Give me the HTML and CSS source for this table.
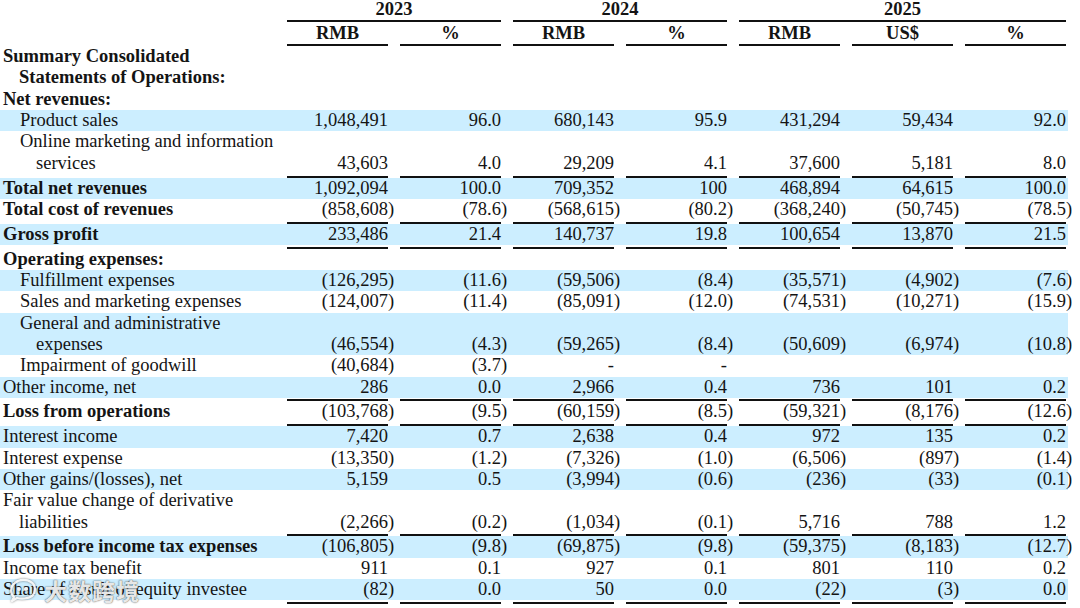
FILE: index.html
```html
<!DOCTYPE html>
<html lang="en">
<head>
<meta charset="utf-8">
<title>Summary Consolidated Statements of Operations</title>
<link rel="stylesheet" href="styles.css">
</head>
<body>
<div class="sheet">
  <div class="r head1">
    <div></div>
    <div class="yr span2">2023</div>
    <div class="yr span2">2024</div>
    <div class="yr span3">2025</div>
  </div>
  <div class="r head2">
    <div></div>
    <div class="ch">RMB</div><div class="ch">%</div>
    <div class="ch">RMB</div><div class="ch">%</div>
    <div class="ch">RMB</div><div class="ch">US$</div><div class="ch">%</div>
  </div>

  <div class="r"><div class="lb b l0">Summary Consolidated<br>Statements of Operations:</div></div>
  <div class="r"><div class="lb b l0">Net revenues:</div></div>

  <div class="r hl"><div class="lb l1">Product sales</div>
    <div class="v">1,048,491</div><div class="v">96.0</div><div class="v">680,143</div><div class="v">95.9</div><div class="v">431,294</div><div class="v">59,434</div><div class="v">92.0</div></div>
  <div class="r"><div class="lb l1">Online marketing and information<br>services</div>
    <div class="v">43,603</div><div class="v">4.0</div><div class="v">29,209</div><div class="v">4.1</div><div class="v">37,600</div><div class="v">5,181</div><div class="v">8.0</div></div>
  <div class="rule"><span></span><i></i><i></i><i></i><i></i><i></i><i></i><i></i></div>

  <div class="r hl"><div class="lb b l0">Total net revenues</div>
    <div class="v">1,092,094</div><div class="v">100.0</div><div class="v">709,352</div><div class="v">100</div><div class="v">468,894</div><div class="v">64,615</div><div class="v">100.0</div></div>
  <div class="r"><div class="lb b l0">Total cost of revenues</div>
    <div class="v"><span class="ng">(858,608)</span></div><div class="v"><span class="ng">(78.6)</span></div><div class="v"><span class="ng">(568,615)</span></div><div class="v"><span class="ng">(80.2)</span></div><div class="v"><span class="ng">(368,240)</span></div><div class="v"><span class="ng">(50,745)</span></div><div class="v"><span class="ng">(78.5)</span></div></div>
  <div class="rule"><span></span><i></i><i></i><i></i><i></i><i></i><i></i><i></i></div>

  <div class="r hl"><div class="lb b l0">Gross profit</div>
    <div class="v">233,486</div><div class="v">21.4</div><div class="v">140,737</div><div class="v">19.8</div><div class="v">100,654</div><div class="v">13,870</div><div class="v">21.5</div></div>
  <div class="rule"><span></span><i></i><i></i><i></i><i></i><i></i><i></i><i></i></div>

  <div class="r"><div class="lb b l0">Operating expenses:</div></div>
  <div class="r hl"><div class="lb l1">Fulfillment expenses</div>
    <div class="v"><span class="ng">(126,295)</span></div><div class="v"><span class="ng">(11.6)</span></div><div class="v"><span class="ng">(59,506)</span></div><div class="v"><span class="ng">(8.4)</span></div><div class="v"><span class="ng">(35,571)</span></div><div class="v"><span class="ng">(4,902)</span></div><div class="v"><span class="ng">(7.6)</span></div></div>
  <div class="r"><div class="lb l1">Sales and marketing expenses</div>
    <div class="v"><span class="ng">(124,007)</span></div><div class="v"><span class="ng">(11.4)</span></div><div class="v"><span class="ng">(85,091)</span></div><div class="v"><span class="ng">(12.0)</span></div><div class="v"><span class="ng">(74,531)</span></div><div class="v"><span class="ng">(10,271)</span></div><div class="v"><span class="ng">(15.9)</span></div></div>
  <div class="r hl"><div class="lb l1">General and administrative<br>expenses</div>
    <div class="v"><span class="ng">(46,554)</span></div><div class="v"><span class="ng">(4.3)</span></div><div class="v"><span class="ng">(59,265)</span></div><div class="v"><span class="ng">(8.4)</span></div><div class="v"><span class="ng">(50,609)</span></div><div class="v"><span class="ng">(6,974)</span></div><div class="v"><span class="ng">(10.8)</span></div></div>
  <div class="r"><div class="lb l1">Impairment of goodwill</div>
    <div class="v"><span class="ng">(40,684)</span></div><div class="v"><span class="ng">(3.7)</span></div><div class="v">-</div><div class="v">-</div><div class="v"></div><div class="v"></div><div class="v"></div></div>
  <div class="r hl"><div class="lb l0">Other income, net</div>
    <div class="v">286</div><div class="v">0.0</div><div class="v">2,966</div><div class="v">0.4</div><div class="v">736</div><div class="v">101</div><div class="v">0.2</div></div>
  <div class="rule"><span></span><i></i><i></i><i></i><i></i><i></i><i></i><i></i></div>

  <div class="r"><div class="lb b l0">Loss from operations</div>
    <div class="v"><span class="ng">(103,768)</span></div><div class="v"><span class="ng">(9.5)</span></div><div class="v"><span class="ng">(60,159)</span></div><div class="v"><span class="ng">(8.5)</span></div><div class="v"><span class="ng">(59,321)</span></div><div class="v"><span class="ng">(8,176)</span></div><div class="v"><span class="ng">(12.6)</span></div></div>
  <div class="rule"><span></span><i></i><i></i><i></i><i></i><i></i><i></i><i></i></div>

  <div class="r hl"><div class="lb l0">Interest income</div>
    <div class="v">7,420</div><div class="v">0.7</div><div class="v">2,638</div><div class="v">0.4</div><div class="v">972</div><div class="v">135</div><div class="v">0.2</div></div>
  <div class="r"><div class="lb l0">Interest expense</div>
    <div class="v"><span class="ng">(13,350)</span></div><div class="v"><span class="ng">(1.2)</span></div><div class="v"><span class="ng">(7,326)</span></div><div class="v"><span class="ng">(1.0)</span></div><div class="v"><span class="ng">(6,506)</span></div><div class="v"><span class="ng">(897)</span></div><div class="v"><span class="ng">(1.4)</span></div></div>
  <div class="r hl"><div class="lb l0">Other gains/(losses), net</div>
    <div class="v">5,159</div><div class="v">0.5</div><div class="v"><span class="ng">(3,994)</span></div><div class="v"><span class="ng">(0.6)</span></div><div class="v"><span class="ng">(236)</span></div><div class="v"><span class="ng">(33)</span></div><div class="v"><span class="ng">(0.1)</span></div></div>
  <div class="r"><div class="lb l0">Fair value change of derivative<br>liabilities</div>
    <div class="v"><span class="ng">(2,266)</span></div><div class="v"><span class="ng">(0.2)</span></div><div class="v"><span class="ng">(1,034)</span></div><div class="v"><span class="ng">(0.1)</span></div><div class="v">5,716</div><div class="v">788</div><div class="v">1.2</div></div>
  <div class="rule"><span></span><i></i><i></i><i></i><i></i><i></i><i></i><i></i></div>

  <div class="r hl"><div class="lb b l0">Loss before income tax expenses</div>
    <div class="v"><span class="ng">(106,805)</span></div><div class="v"><span class="ng">(9.8)</span></div><div class="v"><span class="ng">(69,875)</span></div><div class="v"><span class="ng">(9.8)</span></div><div class="v"><span class="ng">(59,375)</span></div><div class="v"><span class="ng">(8,183)</span></div><div class="v"><span class="ng">(12.7)</span></div></div>
  <div class="r"><div class="lb l0">Income tax benefit</div>
    <div class="v">911</div><div class="v">0.1</div><div class="v">927</div><div class="v">0.1</div><div class="v">801</div><div class="v">110</div><div class="v">0.2</div></div>
  <div class="r hl"><div class="lb l0">Share of result of equity investee</div>
    <div class="v"><span class="ng">(82)</span></div><div class="v">0.0</div><div class="v">50</div><div class="v">0.0</div><div class="v"><span class="ng">(22)</span></div><div class="v"><span class="ng">(3)</span></div><div class="v">0.0</div></div>
  <div class="rule"><span></span><i></i><i></i><i></i><i></i><i></i><i></i><i></i></div>
</div>

<div class="watermark">
  <svg class="wm-icon" width="32" height="26" viewBox="0 0 32 26" aria-hidden="true">
    <path d="M6 20 C2 17 2 9 7 6 C11 2 19 2 23 5 C28 8 28 15 24 19 C20 22 13 22 9 21 L4 24 Z" fill="none" stroke="rgba(255,255,255,0.9)" stroke-width="2.2" stroke-linejoin="round"/>
    <circle cx="11" cy="12" r="2" fill="rgba(255,255,255,0.9)"/>
    <circle cx="18" cy="12" r="2" fill="rgba(255,255,255,0.9)"/>
  </svg>
  <span class="wm-text">大数跨境</span>
</div>
</body>
</html>
```

FILE: styles.css
```css
html, body {
  margin: 0;
  padding: 0;
  background: #ffffff;
}
body {
  width: 1080px;
  height: 608px;
  overflow: hidden;
  position: relative;
  font-family: "Liberation Serif", "Times New Roman", serif;
  font-size: 18.5px;
  color: #141414;
}
.sheet {
  width: 1068px;
}
.r, .rule {
  display: grid;
  grid-template-columns: 275px repeat(7, 101px);
  column-gap: 12px;
}
.r {
  line-height: 21.33px;
  white-space: nowrap;
}
.hl {
  background: #cceeff;
}
.lb {
  grid-column: 1;
}
.b {
  font-weight: bold;
}
.l0 {
  padding-left: 19px;
  text-indent: -16px;
}
.l1 {
  padding-left: 36px;
  text-indent: -16px;
}
.v {
  text-align: right;
  align-self: end;
}
.ng {
  margin-right: -0.333em;
}
.rule {
  height: 2px;
  margin-top: 1.5px;
}
.rule i {
  display: block;
  background: #111;
}
.head1 {
  margin-top: -1.5px;
  font-weight: bold;
}
.yr {
  text-align: center;
  border-bottom: 2px solid #111;
}
.span2 { grid-column: span 2; }
.span3 { grid-column: span 3; }
.head2 {
  padding-top: 1px;
  font-weight: bold;
}
.ch {
  text-align: center;
  border-bottom: 2px solid #111;
}
.watermark {
  position: absolute;
  left: 8px;
  top: 576px;
  display: flex;
  align-items: center;
  gap: 4px;
}
.wm-icon {
  filter: drop-shadow(0 0 1px rgba(60, 60, 60, 0.7));
}
.wm-text {
  font-family: "Noto Sans CJK SC", sans-serif;
  font-size: 23px;
  line-height: 28px;
  font-weight: bold;
  color: rgba(255, 255, 255, 0.9);
  text-shadow: 0 0 1px rgba(40, 40, 40, 0.8), 0 0 2px rgba(60, 60, 60, 0.5);
  letter-spacing: 1px;
}
```
